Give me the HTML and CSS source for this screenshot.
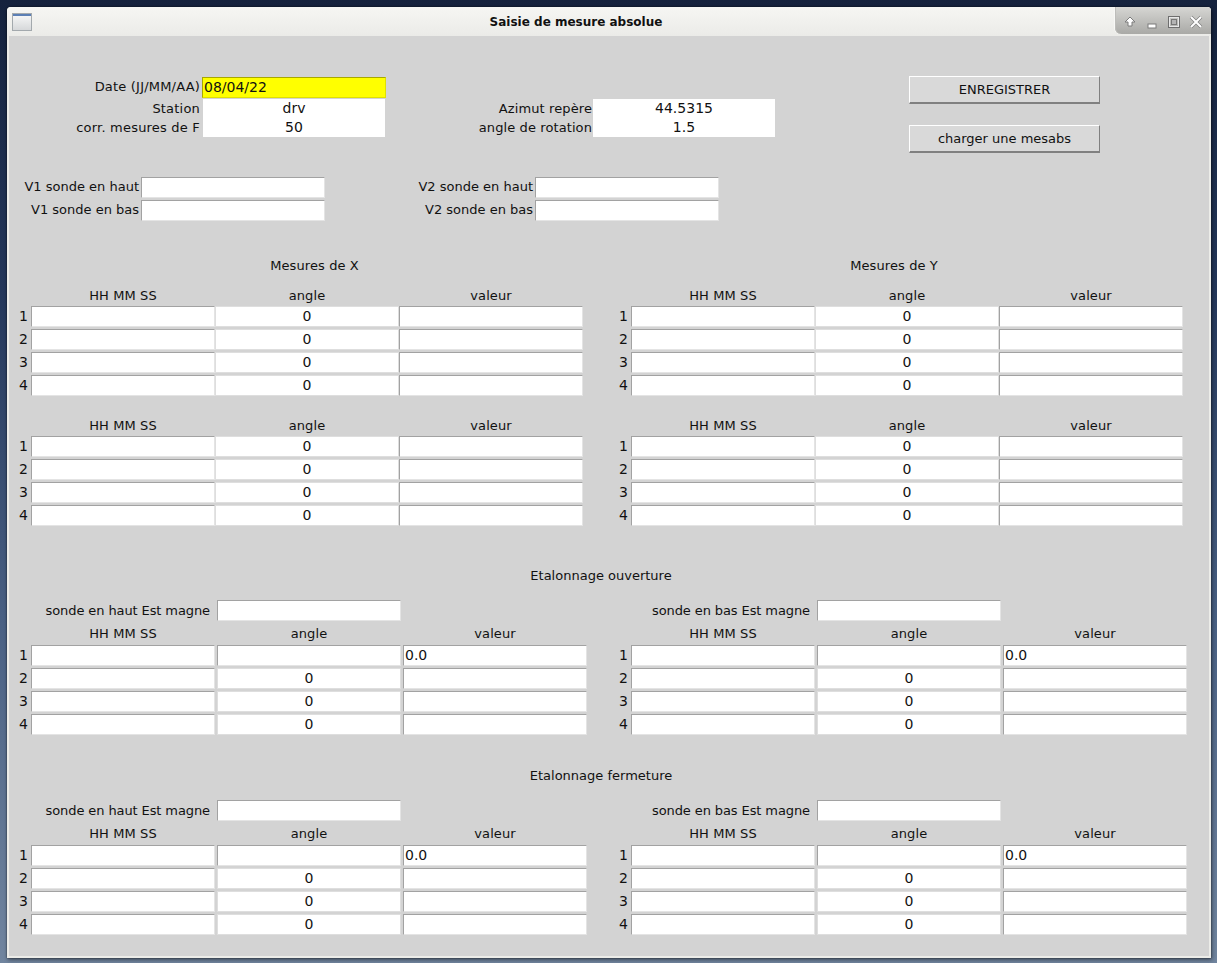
FILE: index.html
```html
<!DOCTYPE html>
<html lang="fr">
<head>
    <meta charset="UTF-8">
    <meta name="viewport" content="width=device-width, initial-scale=1.0">
    <title>Saisie de mesure absolue</title>
    <link rel="stylesheet" href="styles.css">
</head>
<body>
    <div class="window">
        <div class="titlebar">
            <div class="titlebar-menu"><div class="win-icon"></div></div>
            <div class="title">Saisie de mesure absolue</div>
            <div class="win-buttons">
                <svg class="win-btn" viewBox="0 0 14 14"><path d="M7 2 L12 7 L9 7 L9 11 L5 11 L5 7 L2 7 Z" fill="#fff" stroke="#7c7c7c" stroke-width="1"/></svg>
                <svg class="win-btn" viewBox="0 0 14 14"><rect x="3" y="9" width="8" height="4" fill="#fff" stroke="#7c7c7c" stroke-width="1"/></svg>
                <svg class="win-btn" viewBox="0 0 14 14"><rect x="1.5" y="1.5" width="11" height="11" fill="none" stroke="#6e6e6e" stroke-width="1"/><rect x="2.5" y="2.5" width="9" height="9" fill="none" stroke="#e8e8e8" stroke-width="1"/><rect x="4.5" y="4.5" width="5" height="5" fill="#b4b4b4" stroke="#777" stroke-width="1"/></svg>
                <svg class="win-btn" viewBox="0 0 14 14"><path d="M2 2 L12 12 M12 2 L2 12" stroke="#808080" stroke-width="3.4" fill="none"/><path d="M2 2 L12 12 M12 2 L2 12" stroke="#fff" stroke-width="2" fill="none"/></svg>
            </div>
        </div>

        <div class="content">
            <div class="top">
                <div class="top-form">
                    <label>Date (JJ/MM/AA)</label><input class="entry entry-date" value="08/04/22">
                    <label class="label-low">Station</label><input class="flat" value="drv">
                    <label>corr. mesures de F</label><input class="flat flat-last" value="50">
                </div>
                <div class="azimut-form">
                    <label class="label-low">Azimut repère</label><input class="flat" value="44.5315">
                    <label>angle de rotation</label><input class="flat flat-last" value="1.5">
                </div>
                <div class="actions">
                    <button type="button">ENREGISTRER</button>
                    <button type="button">charger une mesabs</button>
                </div>
            </div>

            <div class="variometer">
                <label>V1 sonde en haut</label><input class="entry">
                <label>V2 sonde en haut</label><input class="entry">
                <label>V1 sonde en bas</label><input class="entry">
                <label>V2 sonde en bas</label><input class="entry">
            </div>

            <div class="mesures-titles">
                <div>Mesures de X</div>
                <div>Mesures de Y</div>
            </div>
            <div class="columns">
                <div>
                    <div class="head"><span>HH MM SS</span><span>angle</span><span>valeur</span></div>
                    <div class="row"><span class="num">1</span><input class="entry"><input class="soft" value="0"><input class="entry"></div>
                    <div class="row"><span class="num">2</span><input class="entry"><input class="soft" value="0"><input class="entry"></div>
                    <div class="row"><span class="num">3</span><input class="entry"><input class="soft" value="0"><input class="entry"></div>
                    <div class="row"><span class="num">4</span><input class="entry"><input class="soft" value="0"><input class="entry"></div>
                    <div class="head head-next"><span>HH MM SS</span><span>angle</span><span>valeur</span></div>
                    <div class="row"><span class="num">1</span><input class="entry"><input class="soft" value="0"><input class="entry"></div>
                    <div class="row"><span class="num">2</span><input class="entry"><input class="soft" value="0"><input class="entry"></div>
                    <div class="row"><span class="num">3</span><input class="entry"><input class="soft" value="0"><input class="entry"></div>
                    <div class="row"><span class="num">4</span><input class="entry"><input class="soft" value="0"><input class="entry"></div>
                </div>
                <div>
                    <div class="head"><span>HH MM SS</span><span>angle</span><span>valeur</span></div>
                    <div class="row"><span class="num">1</span><input class="entry"><input class="soft" value="0"><input class="entry"></div>
                    <div class="row"><span class="num">2</span><input class="entry"><input class="soft" value="0"><input class="entry"></div>
                    <div class="row"><span class="num">3</span><input class="entry"><input class="soft" value="0"><input class="entry"></div>
                    <div class="row"><span class="num">4</span><input class="entry"><input class="soft" value="0"><input class="entry"></div>
                    <div class="head head-next"><span>HH MM SS</span><span>angle</span><span>valeur</span></div>
                    <div class="row"><span class="num">1</span><input class="entry"><input class="soft" value="0"><input class="entry"></div>
                    <div class="row"><span class="num">2</span><input class="entry"><input class="soft" value="0"><input class="entry"></div>
                    <div class="row"><span class="num">3</span><input class="entry"><input class="soft" value="0"><input class="entry"></div>
                    <div class="row"><span class="num">4</span><input class="entry"><input class="soft" value="0"><input class="entry"></div>
                </div>
            </div>

            <div class="section-title">Etalonnage ouverture</div>
            <div class="columns">
                <div>
                    <div class="sonde"><label>sonde en haut Est magne</label><input class="entry"></div>
                    <div class="head wide"><span>HH MM SS</span><span>angle</span><span>valeur</span></div>
                    <div class="row wide"><span class="num">1</span><input class="entry"><input class="entry"><input class="entry entry-left" value="0.0"></div>
                    <div class="row wide"><span class="num">2</span><input class="entry"><input class="soft" value="0"><input class="entry"></div>
                    <div class="row wide"><span class="num">3</span><input class="entry"><input class="soft" value="0"><input class="entry"></div>
                    <div class="row wide"><span class="num">4</span><input class="entry"><input class="soft" value="0"><input class="entry"></div>
                </div>
                <div>
                    <div class="sonde"><label>sonde en bas Est magne</label><input class="entry"></div>
                    <div class="head wide"><span>HH MM SS</span><span>angle</span><span>valeur</span></div>
                    <div class="row wide"><span class="num">1</span><input class="entry"><input class="entry"><input class="entry entry-left" value="0.0"></div>
                    <div class="row wide"><span class="num">2</span><input class="entry"><input class="soft" value="0"><input class="entry"></div>
                    <div class="row wide"><span class="num">3</span><input class="entry"><input class="soft" value="0"><input class="entry"></div>
                    <div class="row wide"><span class="num">4</span><input class="entry"><input class="soft" value="0"><input class="entry"></div>
                </div>
            </div>

            <div class="section-title section-title-next">Etalonnage fermeture</div>
            <div class="columns">
                <div>
                    <div class="sonde"><label>sonde en haut Est magne</label><input class="entry"></div>
                    <div class="head wide"><span>HH MM SS</span><span>angle</span><span>valeur</span></div>
                    <div class="row wide"><span class="num">1</span><input class="entry"><input class="entry"><input class="entry entry-left" value="0.0"></div>
                    <div class="row wide"><span class="num">2</span><input class="entry"><input class="soft" value="0"><input class="entry"></div>
                    <div class="row wide"><span class="num">3</span><input class="entry"><input class="soft" value="0"><input class="entry"></div>
                    <div class="row wide"><span class="num">4</span><input class="entry"><input class="soft" value="0"><input class="entry"></div>
                </div>
                <div>
                    <div class="sonde"><label>sonde en bas Est magne</label><input class="entry"></div>
                    <div class="head wide"><span>HH MM SS</span><span>angle</span><span>valeur</span></div>
                    <div class="row wide"><span class="num">1</span><input class="entry"><input class="entry"><input class="entry entry-left" value="0.0"></div>
                    <div class="row wide"><span class="num">2</span><input class="entry"><input class="soft" value="0"><input class="entry"></div>
                    <div class="row wide"><span class="num">3</span><input class="entry"><input class="soft" value="0"><input class="entry"></div>
                    <div class="row wide"><span class="num">4</span><input class="entry"><input class="soft" value="0"><input class="entry"></div>
                </div>
            </div>
        </div>
    </div>
</body>
</html>
```

FILE: styles.css
```css
html, body {
    height: 100%;
}

body {
    margin: 0;
    padding: 7px 0 0 7px;
    box-sizing: border-box;
    overflow: hidden;
    background: linear-gradient(#15223d 0%, #24375a 30%, #4a6184 65%, #71859f 100%);
    font: 13px "DejaVu Sans", sans-serif;
    color: #111;
}

.window {
    width: 1204px;
    height: 951px;
    display: flex;
    flex-direction: column;
    background: #ecece8;
    border-radius: 4px 4px 0 0;
    box-shadow: 0 0 2px rgba(0, 0, 0, 0.7), 1px 2px 4px rgba(0, 0, 0, 0.4);
}

.titlebar {
    height: 29px;
    flex: none;
    display: flex;
    background: linear-gradient(#f6f6f3, #ebebe8);
    border-radius: 4px 4px 0 0;
}

.titlebar-menu {
    width: 30px;
    flex: none;
    padding: 6px 0 0 5px;
    box-sizing: border-box;
}

.win-icon {
    width: 20px;
    height: 18px;
    box-sizing: border-box;
    border: 1px solid #a3a9ad;
    background: linear-gradient(#5b7fb5 0, #5b7fb5 2px, #f4f5f5 2px, #d6d8da 100%);
}

.title {
    flex: 1;
    text-align: center;
    font-size: 12px;
    font-weight: bold;
    line-height: 31px;
    color: #111;
}

.win-buttons {
    width: 96px;
    height: 27px;
    flex: none;
    box-sizing: border-box;
    padding: 8px 0 0 8px;
    display: flex;
    gap: 8px;
    background: linear-gradient(#d6d6d3, #a9a9a6);
    border-radius: 0 4px 0 6px;
    box-shadow: inset 1px 0 0 #bdbdba, -1px 0 0 #f8f8f6;
}

.win-btn {
    width: 14px;
    height: 14px;
}

.content {
    flex: 1;
    margin: 0 2px 2px;
    background: #d3d3d3;
}

label, .head span, .num {
    white-space: nowrap;
}

input {
    display: block;
    width: 184px;
    height: 21px;
    box-sizing: border-box;
    margin: 0;
    padding: 0 1px 2px;
    font: 14px "DejaVu Sans", sans-serif;
    color: #111;
    text-align: center;
    background: #fff;
    outline: none;
}

.entry {
    border-style: solid;
    border-width: 1px;
    border-color: #a2a2a2 #e4e4e4 #e4e4e4 #a2a2a2;
}

.entry-left {
    text-align: left;
}

.entry-date {
    text-align: left;
    background: #ffff00;
    border-color: #a8a800 #e0e000 #e0e000 #a8a800;
}

.soft {
    border: 1px solid #dedede;
}

.flat {
    width: 182px;
    height: 100%;
    margin-left: 1px;
    padding: 0 0 1px;
    border: none;
}

.flat-last {
    padding-bottom: 2px;
}

.label-low {
    line-height: 20px;
}

/* top block */
.top {
    display: flex;
    align-items: flex-start;
    padding-top: 40px;
}

.top-form {
    width: 377px;
    margin-top: 1px;
    display: grid;
    grid-template-columns: 191px 184px;
    grid-template-rows: 22px 19px 19px;
    column-gap: 2px;
    text-align: right;
    line-height: 20px;
    letter-spacing: 0.2px;
}

.azimut-form {
    margin-top: 23px;
    display: grid;
    grid-template-columns: 206px 183px;
    grid-template-rows: 19px 19px;
    text-align: right;
    line-height: 19px;
    letter-spacing: 0.1px;
}

.top-form input, .azimut-form input {
    letter-spacing: 0;
}

.actions {
    width: 191px;
    margin-left: 134px;
    display: flex;
    flex-direction: column;
    gap: 21px;
}

button {
    height: 28px;
    padding: 0;
    font: 13px "DejaVu Sans", sans-serif;
    color: #111;
    background: #d9d9d9;
    border-style: solid;
    border-width: 1px 1px 2px 1px;
    border-color: #fff #808080 #808080 #fff;
}

/* V1 / V2 */
.variometer {
    margin-top: 24px;
    display: grid;
    grid-template-columns: 130px 184px 206px 184px;
    grid-auto-rows: 21px;
    gap: 2px;
    text-align: right;
    line-height: 20px;
}

.mesures-titles {
    margin-top: 34px;
    height: 20px;
    display: grid;
    grid-template-columns: 611px 548px;
    text-align: center;
    line-height: 22px;
    letter-spacing: 0.1px;
}

.columns {
    display: grid;
    grid-template-columns: 600px 600px;
}

.head, .row {
    display: grid;
    grid-template-columns: 22px repeat(3, 184px);
}

.head {
    margin-top: 10px;
    height: 21px;
    line-height: 22px;
    text-align: center;
    letter-spacing: 0.1px;
}

.head span:first-child {
    grid-column: 2;
}

.head-next {
    margin-top: 19px;
}

.row {
    margin-bottom: 2px;
}

.row:last-child {
    margin-bottom: 0;
}

.wide {
    column-gap: 0;
    grid-template-columns: 22px 186px 186px 184px;
}

.wide.head span {
    width: 184px;
}

.head.wide {
    margin-top: 3px;
    line-height: 20px;
}

.num {
    padding-right: 3px;
    text-align: right;
    line-height: 21px;
    font-size: 14px;
}

.section-title {
    margin-top: 39px;
    height: 20px;
    padding-right: 16px;
    text-align: center;
    line-height: 22px;
}

.section-title-next {
    margin-top: 30px;
}

.sonde {
    margin-top: 15px;
    display: flex;
    gap: 7px;
    line-height: 21px;
}

.sonde label {
    width: 201px;
    text-align: right;
    letter-spacing: -0.1px;
}
```
